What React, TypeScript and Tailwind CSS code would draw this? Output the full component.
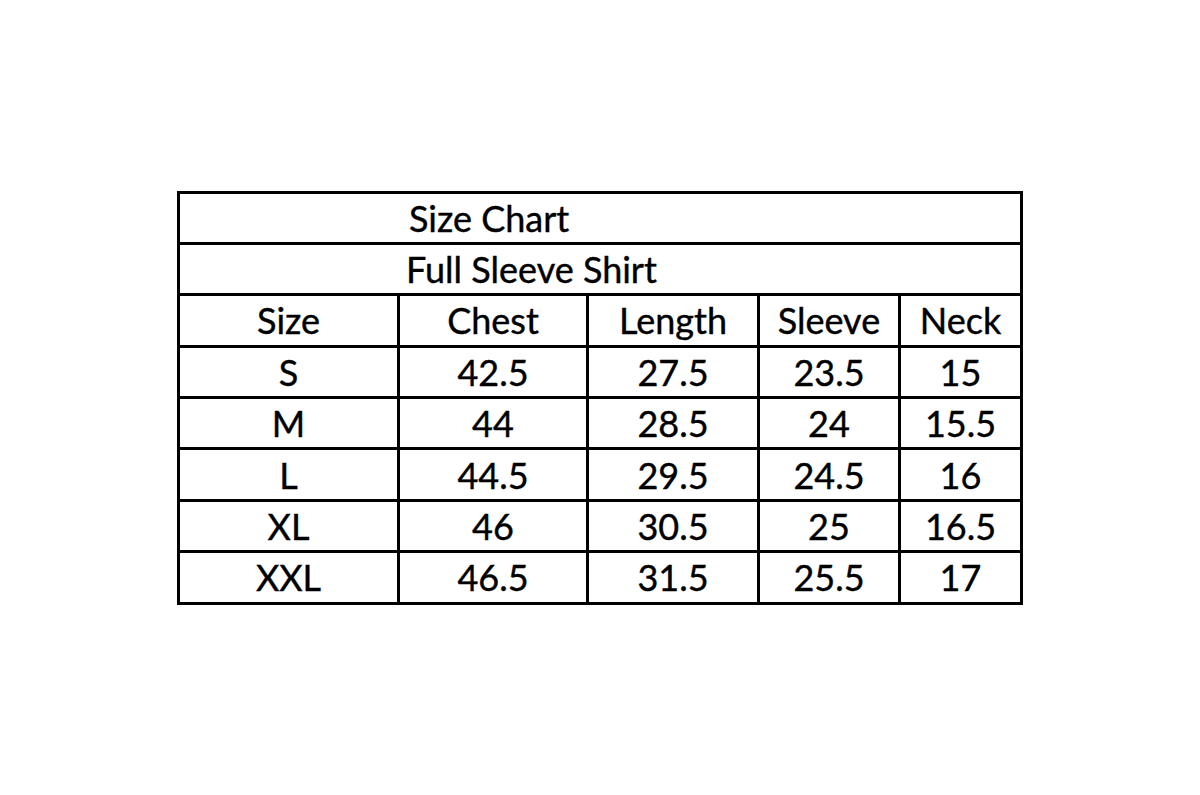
import React from "react";

const header = ["Size", "Chest", "Length", "Sleeve", "Neck"];
const rows = [
  ["S", "42.5", "27.5", "23.5", "15"],
  ["M", "44", "28.5", "24", "15.5"],
  ["L", "44.5", "29.5", "24.5", "16"],
  ["XL", "46", "30.5", "25", "16.5"],
  ["XXL", "46.5", "31.5", "25.5", "17"],
];

export default function App() {
  return (
    <div
      className="w-[1200px] h-[795px] bg-white flex items-center justify-center"
      style={{ fontFamily: "Lato, 'Open Sans', sans-serif" }}
    >
      <div className="w-[846px] h-[414px] bg-black p-[3px] grid grid-cols-[217px_186px_168px_138px_119px] grid-rows-[repeat(8,1fr)] gap-[3px] text-[36px] text-black leading-none [-webkit-text-stroke:0.4px_black]">
        <div className="col-span-5 bg-white flex items-center pl-[229px]">Size Chart</div>
        <div className="col-span-5 bg-white flex items-center pl-[226px]">Full Sleeve Shirt</div>
        {header.map((h) => (
          <div key={h} className="bg-white flex items-center justify-center">
            {h}
          </div>
        ))}
        {rows.map((r) =>
          r.map((c, i) => (
            <div key={r[0] + i} className="bg-white flex items-center justify-center">
              {c}
            </div>
          ))
        )}
      </div>
    </div>
  );
}
